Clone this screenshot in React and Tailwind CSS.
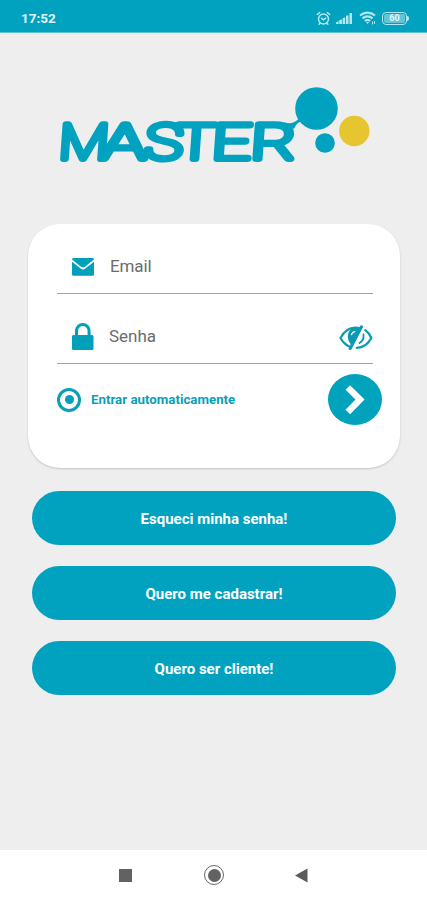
import { useState } from 'react';

const actions = ['Esqueci minha senha!', 'Quero me cadastrar!', 'Quero ser cliente!'];

// Letter positions of the wordmark: start and drawn width
const wordmark = [
  { char: 'M', x: 58, width: 50 },
  { char: 'A', x: 101, width: 44 },
  { char: 'S', x: 144, width: 38 },
  { char: 'T', x: 175, width: 39 },
  { char: 'E', x: 211, width: 39 },
  { char: 'R', x: 250, width: 45 },
];

function StatusBar() {
  return (
    <header className="h-[33px] bg-[#00a2bf] border-b border-[#5fc3d4] flex items-center justify-between pt-[4px] pl-[21px] pr-[18px] text-white shrink-0">
      <span className="text-[13.5px] leading-4 font-bold text-[#e2f6f9]">17:52</span>
      <div className="flex items-center text-[#b5e6ee]">
        {/* Alarm */}
        <svg width="15" height="15" viewBox="0 0 15 15" fill="none" stroke="currentColor" strokeWidth="1.5" strokeLinecap="round">
          <circle cx="7.5" cy="8" r="5" />
          <path d="M1.3 3.5 3.6 1.6M13.7 3.5 11.4 1.6M5.6 7.4l1.8 1.5 2.2-1.7M3.9 12.2l-.8 1M11.1 12.2l.8 1" />
        </svg>
        {/* Signal */}
        <svg className="ml-[5px]" width="17" height="13" viewBox="0 0 17 13" fill="currentColor">
          <path d="M0 12v-1.5L2.6 9v3zM3.2 12V8.2l2.7-1V12zM6.6 12V6.3l2.6-1V12zM10 12V3.500h2.500v8.500zM13.500 12V1H16v11z" />
        </svg>
        {/* Wifi */}
        <svg className="ml-[6px]" width="18" height="14" viewBox="0 0 18 14" fill="none" stroke="currentColor" strokeWidth="2.1">
          <path d="M1 4.500c4.500-3.800 10.500-3.800 15 0M3.500 7.400c3-2.500 7-2.500 10 0M5.800 10c1.700-1.300 3.700-1.300 5.400 0" />
          <path d="M7 11h3l-1.500 2z" fill="currentColor" stroke="none" />
          <path d="M13.500 10.500v3M15.500 10v3" strokeWidth="1" />
        </svg>
        {/* Battery */}
        <div className="ml-[5px] flex items-center">
          <div className="w-[25px] h-[13px] rounded-[4px] border-[1.5px] border-[#b5e6ee] p-px flex">
            <div className="flex-1 rounded-[2px] bg-[#5fc6d7] text-[9px] leading-[9px] font-bold text-center text-[#e2f6f9]">60</div>
          </div>
          <div className="w-[2px] h-[5px] rounded-r bg-[#b5e6ee]" />
        </div>
      </div>
    </header>
  );
}

function Logo() {
  return (
    <svg className="block shrink-0" width="427" height="191" viewBox="0 33 427 191">
      <g fill="#00a2bf">
        <g transform="translate(0 158.500) skewX(-4)">
          <text
            y="0"
            fontFamily="Roboto, 'Liberation Sans', sans-serif"
            fontSize="49"
            fontWeight="100"
            stroke="#00a2bf"
            strokeWidth="6"
            strokeLinejoin="round"
            strokeLinecap="round"
          >
            {wordmark.map(({ char, x, width }) => (
              <tspan key={char} x={x} textLength={width} lengthAdjust="spacingAndGlyphs">{char}</tspan>
            ))}
          </text>
        </g>
        <path d="M284 122c8 3 12 0 17-6l5 5c-6 0-9 1-12 8z" />
        <circle cx="316.500" cy="108.500" r="21.300" />
        <circle cx="325" cy="143" r="9.800" />
      </g>
      <circle cx="354.300" cy="131" r="15.200" fill="#e7c531" />
    </svg>
  );
}

function MailIcon() {
  return (
    <svg width="22" height="18" viewBox="0 0 22 18" fill="#00a0bb">
      <path d="M1.500 0h19q1.500 0 1.500 1.500L13 8.800q-2 1.500-4 0L0 1.500Q0 0 1.500 0z" />
      <path d="M0 3.800 9 10.800q2 1.500 4 0l9-7v12.400q0 1.500-1.500 1.500h-19Q0 17.700 0 16.200z" />
    </svg>
  );
}

function LockIcon() {
  return (
    <svg width="22" height="27" viewBox="0 0 22 27">
      <path d="M4.500 13V8a6.300 6.500 0 0 1 12.600 0v5" fill="none" stroke="#00a0bb" strokeWidth="3" />
      <rect y="12" width="21.500" height="15" rx="1.500" fill="#00a0bb" />
    </svg>
  );
}

function EyeOffIcon() {
  return (
    <svg width="34" height="26" viewBox="0 0 34 26" fill="none" stroke="#0a9bb2" strokeWidth="2.200" strokeLinecap="round">
      <path d="M21 3.200C12 1 5.500 5.500 1.500 13c2.200 4 5 6.800 8.700 8.400" />
      <path d="M12 4c-4 3.500-4.500 11 .2 15.500L21 4c-2.500-1.500-6.500-1.500-9 0z" fill="#0a9bb2" stroke="none" />
      <path d="M12.500 9.500c.5-1.800 1.700-2.700 3.200-2.900" stroke="#fff" strokeWidth="1.400" />
      <path d="M22.500 1.800 11.200 23.500" strokeWidth="3" />
      <path d="M26.300 5.200c2.600 1.800 4.600 4.500 6 7.800-3.300 6.400-8 9.700-14.500 9.800" />
      <path d="M24.500 9.500c.5 4.200-1.200 7-4 8.500" strokeWidth="1.800" />
    </svg>
  );
}

function LoginCard() {
  const [auto, setAuto] = useState(true);

  return (
    <section className="ml-[28px] mr-[27px] h-[244px] rounded-[32px] bg-white shadow-[0_1px_2px_rgba(0,0,0,0.18)] pl-[29px] pr-[18px] shrink-0">
      <div className="mr-[9px] h-[70px] border-b-[1.5px] border-[#a2a2a2] flex items-center pt-[17px] pl-[15px]">
        <MailIcon />
        <span className="ml-[16px] text-[17px] tracking-[-0.1px] text-[#6c6c6c]">Email</span>
      </div>
      <div className="mr-[9px] h-[70px] border-b-[1.5px] border-[#a2a2a2] flex items-center pt-[16px] pl-[15px]">
        <LockIcon />
        <span className="ml-[15px] text-[17px] text-[#6c6c6c]">Senha</span>
        <span className="ml-auto pt-[2px]"><EyeOffIcon /></span>
      </div>

      <div className="flex items-center justify-between pt-[10px]">
        <button onClick={() => setAuto(!auto)} className="flex items-center gap-[10px] text-[#0a9fb6]">
          <span className="w-[24px] h-[24px] rounded-full border-[3.5px] border-[#0a9fb6] flex items-center justify-center">
            {auto && <span className="w-[9px] h-[9px] rounded-full bg-[#0a9fb6]" />}
          </span>
          <span className="text-[13.3px] font-bold pt-px">Entrar automaticamente</span>
        </button>
        <button className="w-[54px] h-[51px] rounded-[50%] bg-[#00a2bc] flex items-center justify-center">
          <svg width="20" height="30" viewBox="0 0 20 30" fill="none" stroke="#fff" strokeWidth="6.500">
            <path d="M2.800 2.500 15 14.500 2.800 27" strokeLinejoin="miter" />
          </svg>
        </button>
      </div>
    </section>
  );
}

function NavBar() {
  return (
    <nav className="mt-auto h-[50px] bg-white flex items-center pl-[119px] shrink-0">
      <div className="w-[13px] h-[13px] bg-[#626262]" />
      <div className="ml-[72px] w-[20px] h-[20px] rounded-full border-[1.5px] border-[#666666] flex items-center justify-center">
        <div className="w-[13px] h-[13px] rounded-full bg-[#626262]" />
      </div>
      <svg className="ml-[71px]" width="13" height="15" viewBox="0 0 13 15" fill="#5c5c5c">
        <path d="M0 7.500 12.500.500v14z" />
      </svg>
    </nav>
  );
}

function App() {
  return (
    <div className="h-screen min-h-[900px] bg-[#eeeeee] flex flex-col font-[Roboto,'Liberation_Sans',sans-serif]">
      <StatusBar />
      <Logo />
      <LoginCard />

      <div className="flex flex-col gap-[21px] pt-[23px] pl-[32px] pr-[31px]">
        {actions.map((label) => (
          <button key={label} className="h-[54px] pt-[2px] rounded-full bg-[#00a2bf] text-white text-[15px] font-bold">
            {label}
          </button>
        ))}
      </div>

      <NavBar />
    </div>
  );
}

export default App;
